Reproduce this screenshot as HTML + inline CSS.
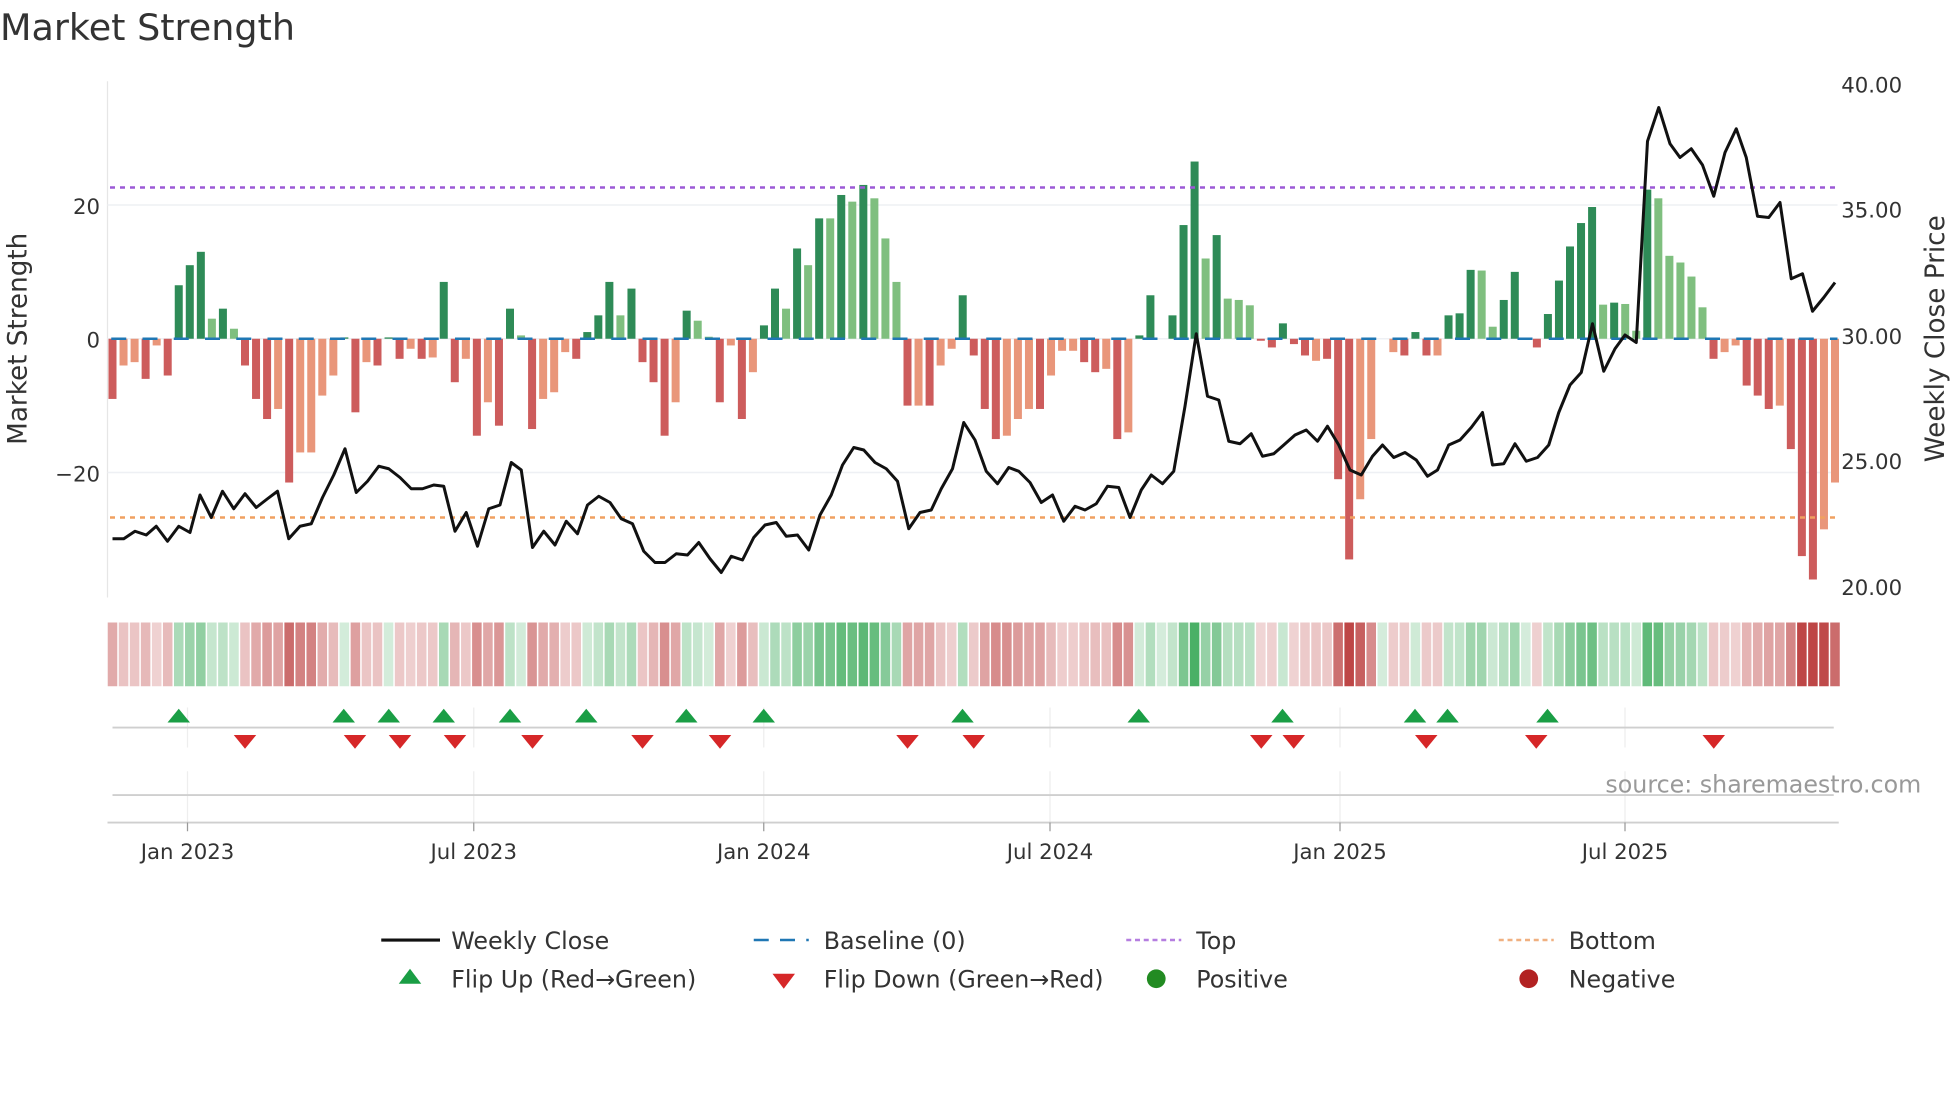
<!DOCTYPE html>
<html><head><meta charset="utf-8"><style>
html,body{margin:0;padding:0;background:#fff;width:1960px;height:1102px;overflow:hidden}
svg text{font-family:"DejaVu Sans","Liberation Sans",sans-serif;fill:#333}
</style></head><body>
<svg id="s" width="1960" height="1102" viewBox="0 0 1568 881.6" xmlns="http://www.w3.org/2000/svg">
<text x="0" y="32" font-size="29.2">Market Strength</text>
<line x1="86" y1="65" x2="86" y2="478" stroke="#e6e6e6" stroke-width="1"/>
<line x1="86" y1="164" x2="1470" y2="164" stroke="#eef0f4" stroke-width="1.2"/>
<line x1="86" y1="378" x2="1470" y2="378" stroke="#eef0f4" stroke-width="1.2"/>
<line x1="86" y1="271" x2="1470" y2="271" stroke="#eef0f4" stroke-width="1.2"/>
<g id="bars"></g>
<line x1="89" y1="271" x2="1470" y2="271" stroke="#1f77b4" stroke-width="2" stroke-dasharray="12 13"/>
<line x1="88" y1="150" x2="1470" y2="150" stroke="#9b59d6" stroke-width="2" stroke-dasharray="4 4"/>
<line x1="88" y1="414" x2="1470" y2="414" stroke="#f0a060" stroke-width="2" stroke-dasharray="4 4"/>
<polyline id="price" fill="none" stroke="#111" stroke-width="2.4" stroke-linejoin="round"/>
<g font-size="17">
<text x="80" y="171" text-anchor="end">20</text>
<text x="80" y="278" text-anchor="end">0</text>
<text x="80" y="385" text-anchor="end">−20</text>
<text x="1473" y="74">40.00</text>
<text x="1473" y="174">35.00</text>
<text x="1473" y="275">30.00</text>
<text x="1473" y="375">25.00</text>
<text x="1473" y="476">20.00</text>
</g>
<text transform="translate(21,271) rotate(-90)" text-anchor="middle" font-size="21">Market Strength</text>
<text transform="translate(1555,271) rotate(-90)" text-anchor="middle" font-size="21">Weekly Close Price</text>
<g id="strip"></g>
<g stroke="#eeeeee" stroke-width="1">
<line x1="150" y1="566" x2="150" y2="598"/><line x1="379" y1="566" x2="379" y2="598"/><line x1="611" y1="566" x2="611" y2="598"/><line x1="840" y1="566" x2="840" y2="598"/><line x1="1072" y1="566" x2="1072" y2="598"/><line x1="1300" y1="566" x2="1300" y2="598"/>
<line x1="150" y1="617" x2="150" y2="658"/><line x1="379" y1="617" x2="379" y2="658"/><line x1="611" y1="617" x2="611" y2="658"/><line x1="840" y1="617" x2="840" y2="658"/><line x1="1072" y1="617" x2="1072" y2="658"/><line x1="1300" y1="617" x2="1300" y2="658"/>
</g>
<line x1="90" y1="582" x2="1467" y2="582" stroke="#cfcfcf" stroke-width="1.5"/>
<line x1="90" y1="636" x2="1467" y2="636" stroke="#cfcfcf" stroke-width="1.5"/>
<line x1="86" y1="658" x2="1471" y2="658" stroke="#cfcfcf" stroke-width="1.5"/>
<g stroke="#999" stroke-width="1">
<line x1="150" y1="658" x2="150" y2="665"/><line x1="379" y1="658" x2="379" y2="665"/><line x1="611" y1="658" x2="611" y2="665"/><line x1="840" y1="658" x2="840" y2="665"/><line x1="1072" y1="658" x2="1072" y2="665"/><line x1="1300" y1="658" x2="1300" y2="665"/>
</g>
<g id="flips"></g>
<text x="1537" y="634" text-anchor="end" font-size="19" style="fill:#999">source: sharemaestro.com</text>
<g font-size="17" text-anchor="middle">
<text x="150" y="687">Jan 2023</text><text x="379" y="687">Jul 2023</text><text x="611" y="687">Jan 2024</text><text x="840" y="687">Jul 2024</text><text x="1072" y="687">Jan 2025</text><text x="1300" y="687">Jul 2025</text>
</g>
<g font-size="19">
<line x1="305" y1="752" x2="352" y2="752" stroke="#111" stroke-width="2.5"/>
<text x="361" y="759">Weekly Close</text>
<line x1="603" y1="752" x2="647" y2="752" stroke="#1f77b4" stroke-width="2" stroke-dasharray="12 9"/>
<text x="659" y="759">Baseline (0)</text>
<line x1="901" y1="752" x2="945" y2="752" stroke="#b57ee0" stroke-width="2" stroke-dasharray="4 3"/>
<text x="957" y="759">Top</text>
<line x1="1199" y1="752" x2="1243" y2="752" stroke="#f0b080" stroke-width="2" stroke-dasharray="4 3"/>
<text x="1255" y="759">Bottom</text>
<polygon points="328,775 337,787 319,787" fill="#1a9e45"/>
<text x="361" y="790">Flip Up (Red→Green)</text>
<polygon points="618,779 636,779 627,791" fill="#d62728"/>
<text x="659" y="790">Flip Down (Green→Red)</text>
<circle cx="925" cy="783" r="7.5" fill="#228b22"/>
<text x="957" y="790">Positive</text>
<circle cx="1223" cy="783" r="7.5" fill="#b22222"/>
<text x="1255" y="790">Negative</text>
</g>
</svg>
<script>
var d="-9R -4r -3.5r -6R -1r -5.5R 8G 11G 13G 3g 4.5G 1.5g -4R -9R -12R -10.5r -21.5R -17r -17r -8.5r -5.5r 0.2G -11R -3.5r -4R 0.2G -3R -1.5r -3R -2.8r 8.5G -6.5R -3r -14.5R -9.5r -13R 4.5G 0.5g -13.5R -9r -8r -2r -3R 1G 3.5G 8.5G 3.5g 7.5G -3.5R -6.5R -14.5R -9.5r 4.2G 2.7g 0.3g -9.5R -1r -12R -5r 2G 7.5G 4.5g 13.5G 11g 18G 18g 21.5G 20.5g 23G 21g 15g 8.5g -10R -10r -10R -4r -1.5r 6.5G -2.5R -10.5R -15R -14.5r -12r -10.5r -10.5R -5.5r -1.8r -1.8r -3.5R -5R -4.5r -15R -14r 0.5G 6.5G 0G 3.5G 17G 26.5G 12g 15.5G 6g 5.8g 5g -0.3R -1.3R 2.3G -0.8R -2.5R -3.3r -3R -21R -33R -24r -15r 0G -2r -2.5R 1G -2.5R -2.5r 3.5G 3.8G 10.3G 10.2g 1.8g 5.8G 10G 0G -1.3R 3.7G 8.7G 13.8G 17.3G 19.7G 5.1g 5.4G 5.2g 1.2g 22.3G 21g 12.4g 11.4g 9.3g 4.7g -3R -2r -1r -7R -8.5R -10.5R -10r -16.5R -32.5R -36R -28.5r -21.5r".split(" ");
var col={G:"#2e8b57",g:"#7fbf7f",R:"#cd5c5c",r:"#e9967a"};
var ns="http://www.w3.org/2000/svg";
function el(t,a,p){var e=document.createElementNS(ns,t);for(var k in a)e.setAttribute(k,a[k]);document.getElementById(p).appendChild(e);return e;}
var step=(1468-90)/(d.length-1);
d.forEach(function(s,i){
 var v=parseFloat(s),c=s.slice(-1),x=90+step*i;
 var h=Math.abs(v)*5.35,y=v>=0?271-h:271;
 if(h>0.2)el("rect",{x:(x-3.2).toFixed(2),y:y.toFixed(2),width:6.4,height:h.toFixed(2),fill:col[c]},"bars");
 var a=Math.min(1,0.22+Math.abs(v)/30*0.8);
 var base=v>=0?[60,170,90]:[190,70,70];
 var rr=Math.round(255-(255-base[0])*a),gg=Math.round(255-(255-base[1])*a),bb=Math.round(255-(255-base[2])*a);
 el("rect",{x:(x-step/2+0.6).toFixed(2),y:498,width:(step-1.2).toFixed(2),height:51,fill:"rgb("+rr+","+gg+","+bb+")"},"strip");
});
var p="90 431,99 431,108 425,117 428,125 421,134 433,143 421,152 426,160 396,169 414,178 393,187 407,196 395,205 406,214 399,222 393,231 431,240 421,249 419,258 398,267 380,276 359,285 394,294 385,303 373,311 375,320 382,329 391,338 391,347 388,355 389,364 425,373 410,382 437,391 407,400 404,409 370,417 376,426 438,435 425,444 436,453 417,462 427,470 404,479 397,488 402,497 415,506 419,515 441,524 450,532 450,541 443,550 444,559 434,568 447,577 458,585 445,594 448,603 430,612 420,621 418,629 429,638 428,647 440,656 412,665 396,674 372,683 358,691 360,700 370,709 375,718 385,727 423,736 410,745 408,753 391,762 375,771 338,780 352,789 377,798 387,807 374,815 377,824 386,833 402,842 396,851 417,860 405,868 408,877 403,886 389,895 390,904 414,913 392,921 380,930 387,939 377,948 325,957 267,966 317,975 320,983 353,992 355,1001 347,1010 365,1019 363,1027 356,1036 348,1045 344,1054 353,1062 341,1071 356,1080 376,1089 380,1098 365,1106 356,1115 366,1124 362,1133 368,1142 381,1150 376,1159 356,1168 352,1177 342,1186 330,1194 372,1203 371,1212 355,1221 369,1230 366,1239 356,1247 330,1256 308,1265 298,1274 259,1283 297,1292 279,1300 268,1309 274,1318 113,1327 86,1336 115,1344 126,1353 119,1362 132,1371 157,1380 122,1389 103,1397 126,1406 173,1415 174,1424 162,1433 223,1442 219,1450 249,1459 238,1468 226";
document.getElementById("price").setAttribute("points",p);
[143,275,311,355,408,469,549,611,770,911,1026,1132,1158,1238].forEach(function(x){el("polygon",{points:x+",567 "+(x+9)+",578 "+(x-9)+",578",fill:"#1a9e45"},"flips");});
[196,284,320,364,426,514,576,726,779,1009,1035,1141,1229,1371].forEach(function(x){el("polygon",{points:(x-9)+",588 "+(x+9)+",588 "+x+",599",fill:"#d62728"},"flips");});
</script>
</body></html>
